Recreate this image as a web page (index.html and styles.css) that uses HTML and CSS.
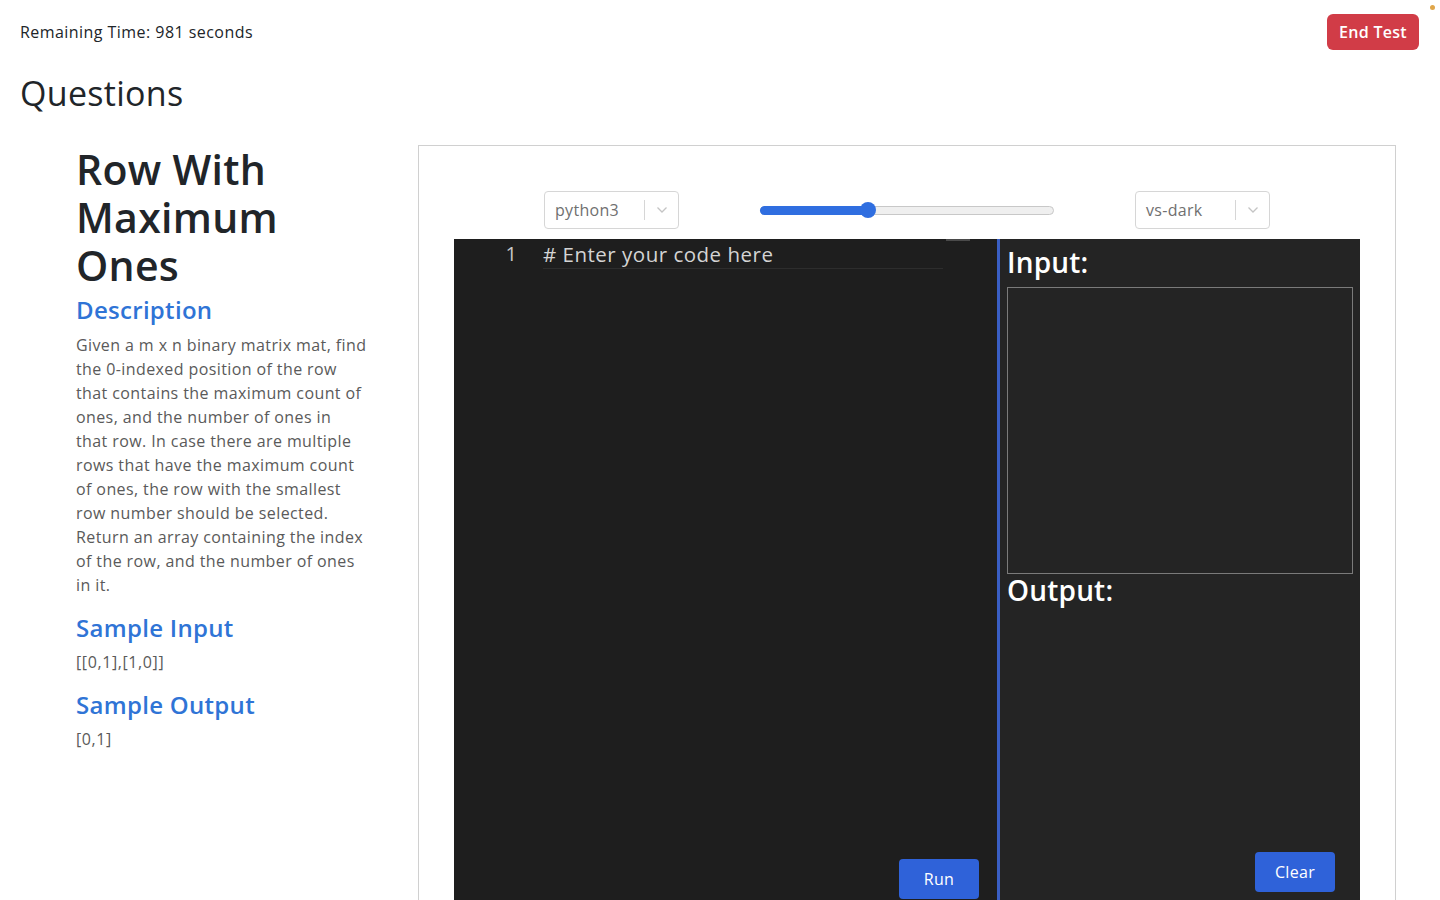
FILE: index.html
```html
<!DOCTYPE html>
<html lang="en">
<head>
<meta charset="utf-8">
<title>Coding Test</title>
<link rel="stylesheet" href="styles.css">
</head>
<body>
<header class="topbar">
  <div class="timer">Remaining Time: 981 seconds</div>
  <button class="btn-end">End Test</button>
  <span class="dot"></span>
</header>
<h1 class="page-title">Questions</h1>
<main class="layout">
  <section class="question">
    <h2 class="q-title">Row With Maximum Ones</h2>
    <h3 class="q-head q-head-first">Description</h3>
    <p class="q-text">Given a m x n binary matrix mat, find<br>the 0-indexed position of the row<br>that contains the maximum count of<br>ones, and the number of ones in<br>that row. In case there are multiple<br>rows that have the maximum count<br>of ones, the row with the smallest<br>row number should be selected.<br>Return an array containing the index<br>of the row, and the number of ones<br>in it.</p>
    <h3 class="q-head">Sample Input</h3>
    <p class="q-sample">[[0,1],[1,0]]</p>
    <h3 class="q-head">Sample Output</h3>
    <p class="q-sample">[0,1]</p>
  </section>
  <section class="panel">
    <div class="controls">
      <div class="select">
        <span class="select-value">python3</span>
        <span class="select-sep"></span>
        <svg class="select-arrow" width="12" height="8" viewBox="0 0 12 8"><path d="M1.5 1.5 L6 6 L10.5 1.5" fill="none" stroke="#c4c4c4" stroke-width="1.3"/></svg>
      </div>
      <div class="slider">
        <div class="slider-fill"></div>
        <div class="slider-thumb"></div>
      </div>
      <div class="select">
        <span class="select-value">vs-dark</span>
        <span class="select-sep"></span>
        <svg class="select-arrow" width="12" height="8" viewBox="0 0 12 8"><path d="M1.5 1.5 L6 6 L10.5 1.5" fill="none" stroke="#c4c4c4" stroke-width="1.3"/></svg>
      </div>
    </div>
    <div class="ide">
      <div class="editor">
        <div class="code-line">
          <span class="line-no">1</span>
          <span class="line-text"># Enter your code here</span>
        </div>
        <span class="minimap"></span>
        <div class="editor-foot">
          <button class="btn-blue btn-run">Run</button>
        </div>
      </div>
      <div class="io">
        <div class="io-label io-label-in">Input:</div>
        <div class="io-input"></div>
        <div class="io-label io-label-out">Output:</div>
        <div class="io-foot">
          <button class="btn-blue btn-clear">Clear</button>
        </div>
      </div>
    </div>
  </section>
</main>
</body>
</html>
```
FILE: styles.css
```css
* { box-sizing: border-box; }
html, body { margin: 0; padding: 0; }
body {
  font-family: "Open Sans", "DejaVu Sans", sans-serif;
  color: #212529;
  background: #fff;
  overflow: hidden;
  height: 900px;
}
.topbar {
  position: relative;
  display: flex;
  justify-content: space-between;
  align-items: center;
  padding: 14px 20px 0 20px;
  height: 50px;
}
.timer { font-size: 16px; letter-spacing: 0.45px; }
.btn-end {
  font-family: inherit;
  background: #d13c47;
  color: #fff;
  border: none;
  border-radius: 6px;
  font-size: 16px;
  font-weight: 600;
  letter-spacing: 0.3px;
  width: 92px;
  height: 36px;
  padding: 0;
  margin-right: 1px;
}
.dot {
  position: absolute;
  right: 5px;
  top: 5px;
  width: 5px;
  height: 5px;
  border-radius: 50%;
  background: #e0a64a;
}
.page-title {
  margin: 23px 0 0 20px;
  font-size: 34px;
  font-weight: 500;
  line-height: 40px;
  letter-spacing: 0.3px;
}
.layout {
  display: flex;
  margin-top: 32px;
  padding-left: 76px;
  gap: 42px;
}
.question { width: 300px; flex: none; }
.q-title {
  margin: 0;
  width: 240px;
  font-size: 41px;
  font-weight: 600;
  line-height: 48px;
  letter-spacing: 0.3px;
}
.q-head {
  margin: 16px 0 7px;
  font-size: 24px;
  font-weight: 600;
  color: #2f74d6;
  line-height: 30px;
  letter-spacing: 0.3px;
}
.q-head-first { margin: 6px 0 8px; }
.q-text {
  margin: 0;
  width: 320px;
  font-size: 16px;
  line-height: 24px;
  letter-spacing: 0.4px;
  color: #5a5a5a;
}
.q-sample {
  margin: 0;
  font-size: 16px;
  line-height: 24px;
  letter-spacing: 0.6px;
  color: #5a5a5a;
}
.panel {
  width: 978px;
  flex: none;
  border: 1px solid #d0d0d0;
  height: 800px;
  padding: 45px 35px 0;
}
.controls {
  display: flex;
  justify-content: space-between;
  align-items: center;
  padding: 0 90px;
  height: 38px;
}
.select {
  display: flex;
  align-items: center;
  width: 135px;
  height: 38px;
  border: 1px solid #d6d6d6;
  border-radius: 4px;
  padding: 0 10px;
}
.select-value {
  flex: 1;
  font-size: 16px;
  letter-spacing: 0.3px;
  color: #707070;
}
.select-sep {
  width: 1px;
  height: 20px;
  background: #d6d6d6;
  margin-right: 11px;
}
.select-arrow { flex: none; }
.slider {
  position: relative;
  width: 294px;
  height: 9px;
  border: 1px solid #c8c8c8;
  border-radius: 5px;
  background: #efefef;
}
.slider-fill {
  position: absolute;
  left: -1px;
  top: -1px;
  width: 108px;
  height: 9px;
  background: #2f6ee0;
  border-radius: 5px 0 0 5px;
}
.slider-thumb {
  position: absolute;
  left: 99px;
  top: -5px;
  width: 16px;
  height: 16px;
  border-radius: 50%;
  background: #2f6ee0;
}
.ide {
  display: flex;
  margin-top: 10px;
  height: 700px;
}
.editor {
  position: relative;
  width: 543px;
  background: #1e1e1e;
  display: flex;
  flex-direction: column;
}
.code-line {
  display: flex;
  align-items: center;
  height: 30px;
}
.line-no {
  width: 63px;
  text-align: right;
  color: #c8c8c8;
  font-size: 20px;
  line-height: 30px;
}
.line-text {
  margin-left: 26px;
  width: 400px;
  height: 30px;
  line-height: 30px;
  color: #d4d4d4;
  font-size: 20.5px;
  letter-spacing: 0.5px;
  border-bottom: 1px solid #2d2d2d;
}
.minimap {
  position: absolute;
  left: 492px;
  top: 0;
  width: 24px;
  height: 2px;
  background: #4a4a4a;
}
.editor-foot {
  margin-top: auto;
  display: flex;
  justify-content: flex-end;
  padding: 0 18px 40px 0;
}
.btn-blue {
  font-family: inherit;
  background: #2f62d9;
  color: #fff;
  border: none;
  border-radius: 4px;
  font-size: 16px;
  letter-spacing: 0.3px;
  width: 80px;
  height: 40px;
  padding: 0;
}
.io {
  width: 363px;
  border-left: 3px solid #3a5fc4;
  background: #242424;
  padding: 0 7px;
  display: flex;
  flex-direction: column;
}
.io-label {
  color: #fff;
  font-size: 28px;
  font-weight: 600;
  line-height: 32px;
  letter-spacing: 0.2px;
}
.io-label-in { margin-top: 7px; }
.io-input {
  margin-top: 9px;
  height: 287px;
  border: 1px solid #7a7a7a;
}
.io-foot {
  margin-top: auto;
  display: flex;
  justify-content: flex-end;
  padding: 0 18px 47px 0;
}
```
